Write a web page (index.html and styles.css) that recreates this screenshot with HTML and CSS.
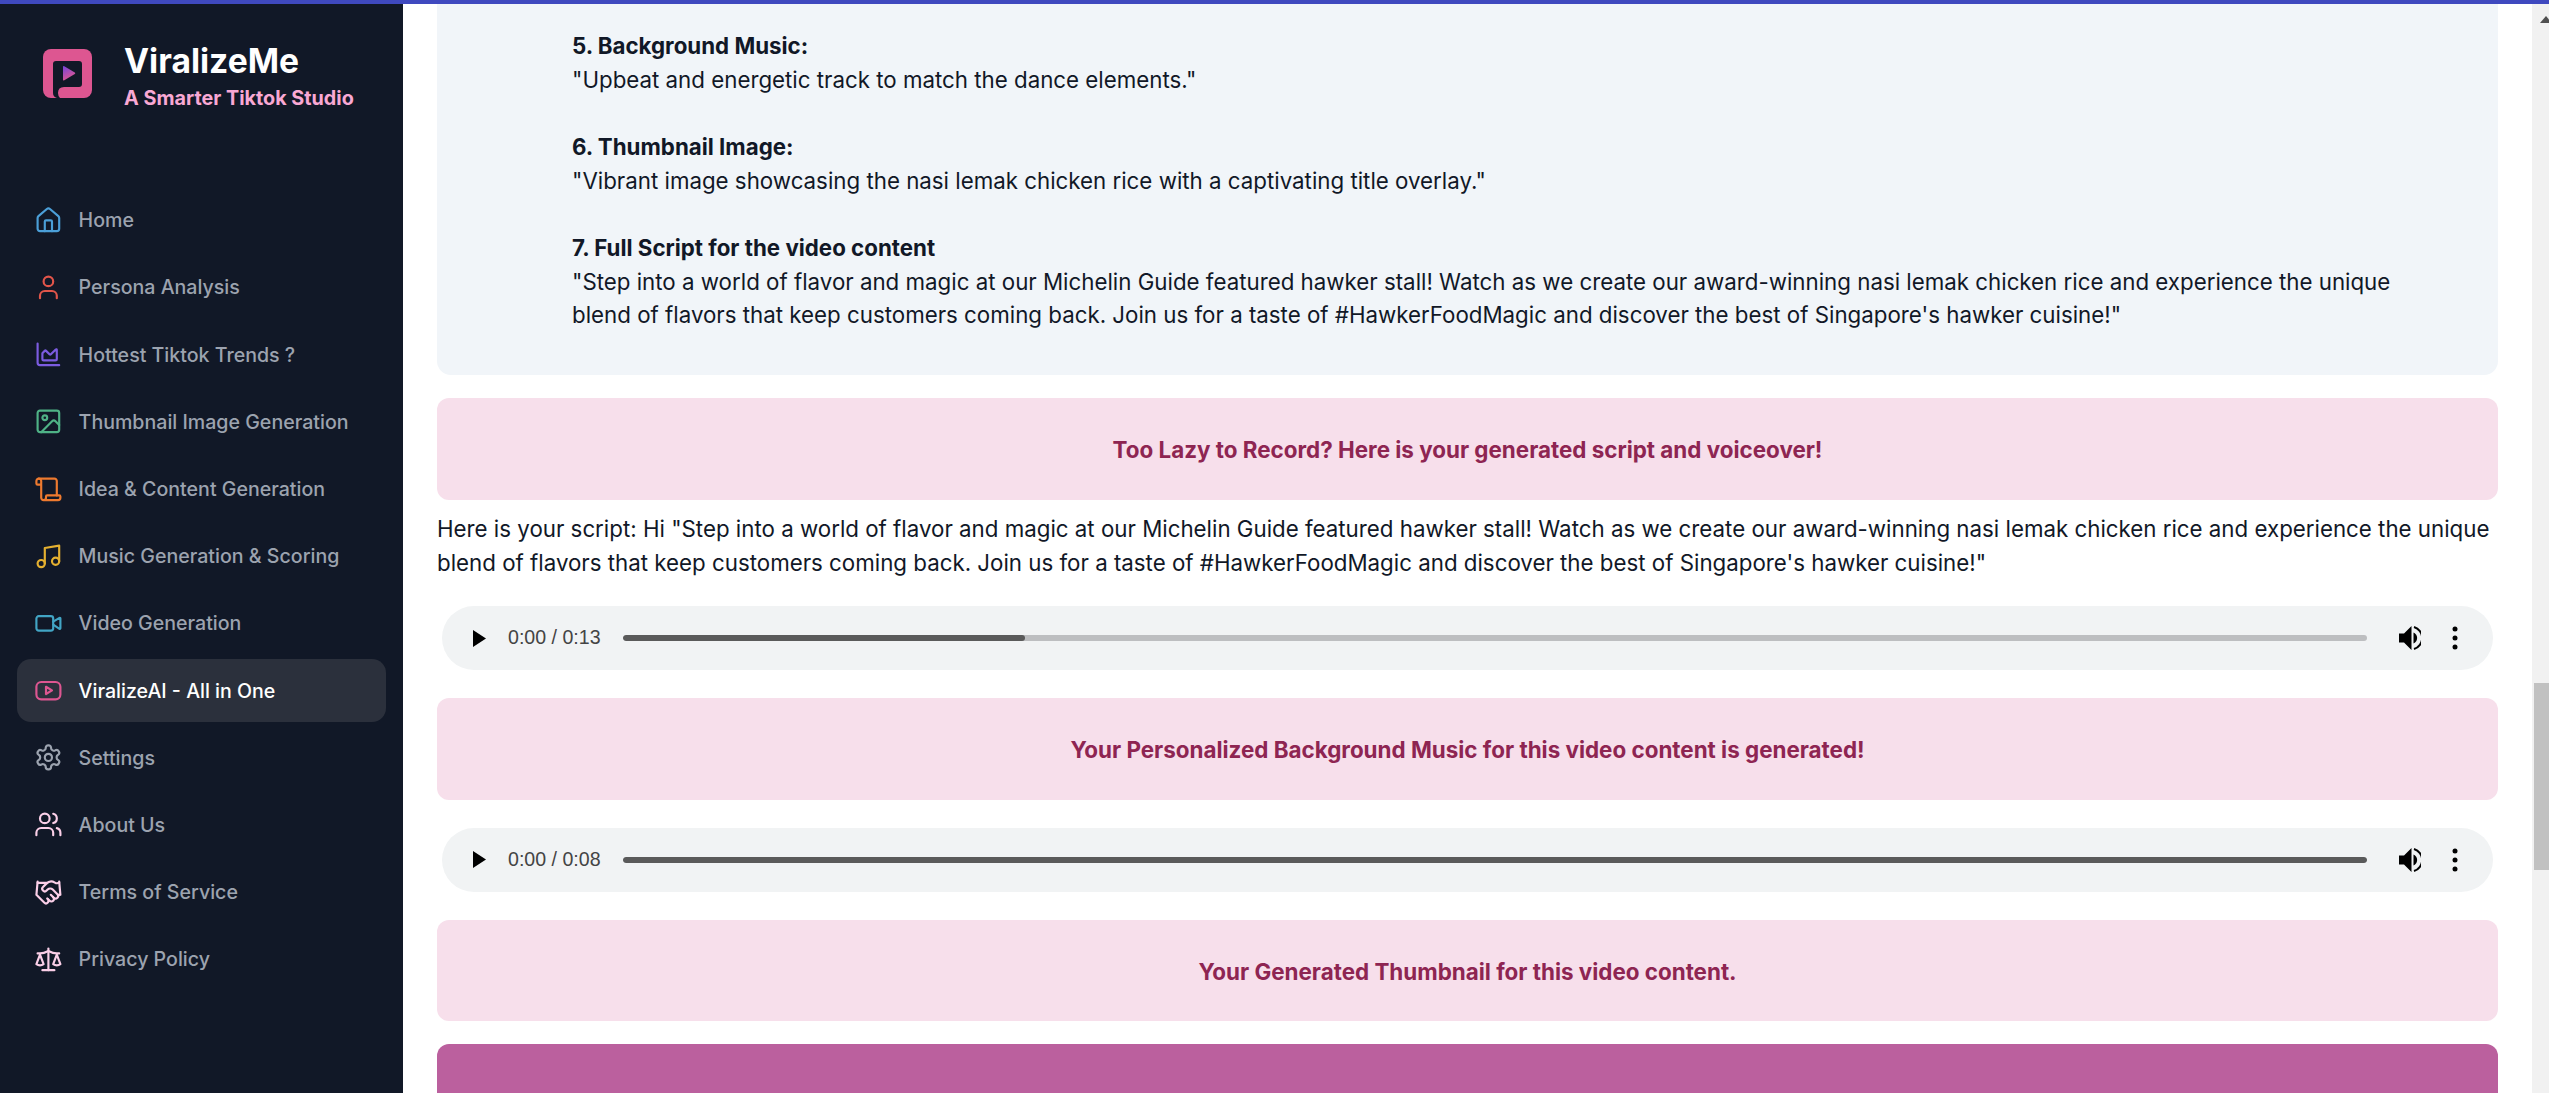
FILE: index.html
```html
<!DOCTYPE html>
<html lang="en">
<head>
  <meta charset="UTF-8">
  <title>ViralizeMe</title>
  <link rel="stylesheet" href="styles.css">
</head>
<body>

  <div class="topbar"></div>

  <div class="layout">
    <aside class="sidebar">
      <div class="brand">
        <svg class="logo" viewBox="0 0 49 49">
          <defs>
            <linearGradient id="playGrad" x1="0" y1="0" x2="0.4" y2="1">
              <stop offset="0" stop-color="#7444dc"/>
              <stop offset="1" stop-color="#dd5691"/>
            </linearGradient>
          </defs>
          <rect width="49" height="49" rx="8" fill="#dd5691"/>
          <path fill="#111827" d="M10 15q0-3 3-3h23q3 0 3 3v20q0 3-3 3H21q-6 0-6 6q0 3 2 5h-3q-4-1-4-5z"/>
          <path fill="url(#playGrad)" d="M20 18q0-1.500 1.300-.8l10.500 6.300q1 .7 0 1.400l-10.500 6.300q-1.300.7-1.300-.8z"/>
        </svg>
        <div>
          <div class="brand-name">ViralizeMe</div>
          <div class="brand-sub">A Smarter Tiktok Studio</div>
        </div>
      </div>

      <nav class="nav">
        <a class="nav-item">
          <svg class="icon ic-blue" viewBox="0 0 24 24"><path d="M15 21v-8a1 1 0 0 0-1-1h-4a1 1 0 0 0-1 1v8"/><path d="M3 10a2 2 0 0 1 .709-1.528l7-5.999a2 2 0 0 1 2.582 0l7 5.999A2 2 0 0 1 21 10v9a2 2 0 0 1-2 2H5a2 2 0 0 1-2-2z"/></svg>
          Home
        </a>
        <a class="nav-item">
          <svg class="icon ic-red" viewBox="0 0 24 24"><path d="M19 21v-2a4 4 0 0 0-4-4H9a4 4 0 0 0-4 4v2"/><circle cx="12" cy="7" r="4"/></svg>
          Persona Analysis
        </a>
        <a class="nav-item">
          <svg class="icon ic-purple" viewBox="0 0 24 24"><path d="M3 3v16a2 2 0 0 0 2 2h16"/><path d="M7 11.207a.5.5 0 0 1 .146-.353l2-2a.5.5 0 0 1 .708 0l3.292 3.292a.5.5 0 0 0 .708 0l4.292-4.292a.5.5 0 0 1 .854.353V16a1 1 0 0 1-1 1H8a1 1 0 0 1-1-1z"/></svg>
          Hottest Tiktok Trends ?
        </a>
        <a class="nav-item">
          <svg class="icon ic-green" viewBox="0 0 24 24"><rect x="3" y="3" width="18" height="18" rx="2"/><circle cx="9" cy="9" r="2"/><path d="m21 15-3.086-3.086a2 2 0 0 0-2.828 0L6 21"/></svg>
          Thumbnail Image Generation
        </a>
        <a class="nav-item">
          <svg class="icon ic-orange" viewBox="0 0 24 24"><path d="M19 17V5a2 2 0 0 0-2-2H4"/><path d="M8 21h12a2 2 0 0 0 2-2v-1a1 1 0 0 0-1-1H11a1 1 0 0 0-1 1v1a2 2 0 1 1-4 0V5a2 2 0 1 0-4 0v2a1 1 0 0 0 1 1h3"/></svg>
          Idea &amp; Content Generation
        </a>
        <a class="nav-item">
          <svg class="icon ic-yellow" viewBox="0 0 24 24"><path d="M9 18V5l12-2v13"/><circle cx="6" cy="18" r="3"/><circle cx="18" cy="16" r="3"/></svg>
          Music Generation &amp; Scoring
        </a>
        <a class="nav-item">
          <svg class="icon ic-cyan" viewBox="0 0 24 24"><path d="m16 13 5.223 3.482a.5.5 0 0 0 .777-.416V7.870a.5.5 0 0 0-.752-.432L16 10.500"/><rect x="2" y="6" width="14" height="12" rx="2"/></svg>
          Video Generation
        </a>
        <a class="nav-item active">
          <svg class="icon ic-pink" viewBox="0 0 24 24"><rect x="2" y="5" width="20" height="14.500" rx="4"/><path d="m10 9 5 3-5 3z"/></svg>
          ViralizeAI - All in One
        </a>
        <a class="nav-item">
          <svg class="icon ic-gray" viewBox="0 0 24 24"><path d="M12.220 2h-.44a2 2 0 0 0-2 2v.18a2 2 0 0 1-1 1.730l-.43.25a2 2 0 0 1-2 0l-.15-.08a2 2 0 0 0-2.730.73l-.22.38a2 2 0 0 0 .73 2.730l.15.1a2 2 0 0 1 1 1.720v.51a2 2 0 0 1-1 1.740l-.15.09a2 2 0 0 0-.73 2.730l.22.38a2 2 0 0 0 2.730.73l.15-.08a2 2 0 0 1 2 0l.43.25a2 2 0 0 1 1 1.730V20a2 2 0 0 0 2 2h.44a2 2 0 0 0 2-2v-.18a2 2 0 0 1 1-1.730l.43-.25a2 2 0 0 1 2 0l.15.08a2 2 0 0 0 2.730-.73l.22-.39a2 2 0 0 0-.73-2.730l-.15-.08a2 2 0 0 1-1-1.740v-.5a2 2 0 0 1 1-1.740l.15-.09a2 2 0 0 0 .73-2.730l-.22-.38a2 2 0 0 0-2.730-.73l-.15.08a2 2 0 0 1-2 0l-.43-.25a2 2 0 0 1-1-1.730V4a2 2 0 0 0-2-2z"/><circle cx="12" cy="12" r="3"/></svg>
          Settings
        </a>
        <a class="nav-item">
          <svg class="icon ic-light" viewBox="0 0 24 24"><path d="M16 21v-2a4 4 0 0 0-4-4H6a4 4 0 0 0-4 4v2"/><circle cx="9" cy="7" r="4"/><path d="M22 21v-2a4 4 0 0 0-3-3.870"/><path d="M16 3.130a4 4 0 0 1 0 7.750"/></svg>
          About Us
        </a>
        <a class="nav-item">
          <svg class="icon ic-light" viewBox="0 0 24 24"><path d="m11 17 2 2a1 1 0 1 0 3-3"/><path d="m14 14 2.500 2.500a1 1 0 1 0 3-3l-3.880-3.880a3 3 0 0 0-4.240 0l-.88.88a1 1 0 1 1-3-3l2.810-2.810a5.790 5.790 0 0 1 7.060-.87l.47.28a2 2 0 0 0 1.420.25L21 4"/><path d="m21 3 1 11h-2"/><path d="M3 3 2 14l6.500 6.500a1 1 0 1 0 3-3"/><path d="M3 4h8"/></svg>
          Terms of Service
        </a>
        <a class="nav-item">
          <svg class="icon ic-light" viewBox="0 0 24 24"><path d="m16 16 3-8 3 8c-.87.65-1.920 1-3 1s-2.130-.35-3-1Z"/><path d="m2 16 3-8 3 8c-.87.65-1.920 1-3 1s-2.130-.35-3-1Z"/><path d="M7 21h10"/><path d="M12 3v18"/><path d="M3 7h2c2 0 5-1 7-2 2 1 5 2 7 2h2"/></svg>
          Privacy Policy
        </a>
      </nav>
    </aside>

    <main class="main">
      <div class="result-box">
        <p class="result-line"><b>5. Background Music:</b></p>
        <p class="result-line">"Upbeat and energetic track to match the dance elements."</p>
        <p class="result-line">&nbsp;</p>
        <p class="result-line"><b>6. Thumbnail Image:</b></p>
        <p class="result-line">"Vibrant image showcasing the nasi lemak chicken rice with a captivating title overlay."</p>
        <p class="result-line">&nbsp;</p>
        <p class="result-line"><b>7. Full Script for the video content</b></p>
        <p class="result-line">"Step into a world of flavor and magic at our Michelin Guide featured hawker stall! Watch as we create our award-winning nasi lemak chicken rice and experience the unique blend of flavors that keep customers coming back. Join us for a taste of #HawkerFoodMagic and discover the best of Singapore's hawker cuisine!"</p>
      </div>

      <div class="banner first">Too Lazy to Record? Here is your generated script and voiceover!</div>

      <p class="script">Here is your script: Hi "Step into a world of flavor and magic at our Michelin Guide featured hawker stall! Watch as we create our award-winning nasi lemak chicken rice and experience the unique blend of flavors that keep customers coming back. Join us for a taste of #HawkerFoodMagic and discover the best of Singapore's hawker cuisine!"</p>

      <div class="player">
        <svg class="play" viewBox="0 0 13 17"><path d="M0 0l13 8.500L0 17z"/></svg>
        <span class="time">0:00 / 0:13</span>
        <div class="track"><div class="progress" style="width: 23.060%"></div></div>
        <svg class="volume" viewBox="0 0 22 26"><path d="M0 8.500h5L12.500 1v24L5 17.500H0z"/><path class="wave" d="M14.500 7.500a6 6 0 0 1 0 11z"/><path class="wave-line" d="M15 2a11.500 11.500 0 0 1 0 22"/></svg>
        <svg class="dots" viewBox="0 0 6 24"><circle cx="3" cy="3" r="2.500"/><circle cx="3" cy="12" r="2.500"/><circle cx="3" cy="21" r="2.500"/></svg>
      </div>

      <div class="banner">Your Personalized Background Music for this video content is generated!</div>

      <div class="player">
        <svg class="play" viewBox="0 0 13 17"><path d="M0 0l13 8.500L0 17z"/></svg>
        <span class="time">0:00 / 0:08</span>
        <div class="track"><div class="progress" style="width: 100%"></div></div>
        <svg class="volume" viewBox="0 0 22 26"><path d="M0 8.500h5L12.500 1v24L5 17.500H0z"/><path class="wave" d="M14.500 7.500a6 6 0 0 1 0 11z"/><path class="wave-line" d="M15 2a11.500 11.500 0 0 1 0 22"/></svg>
        <svg class="dots" viewBox="0 0 6 24"><circle cx="3" cy="3" r="2.500"/><circle cx="3" cy="12" r="2.500"/><circle cx="3" cy="21" r="2.500"/></svg>
      </div>

      <div class="banner">Your Generated Thumbnail for this video content.</div>

      <div class="thumbnail"></div>
    </main>

    <div class="scrollbar">
      <svg class="scroll-arrow" viewBox="0 0 17 24"><path d="M8 19l6-7 6 7z"/></svg>
      <div class="scroll-thumb"></div>
    </div>
  </div>

</body>
</html>
```

FILE: styles.css
```css
* {
  box-sizing: border-box;
}

html, body {
  height: 100%;
}

body {
  margin: 0;
  display: flex;
  flex-direction: column;
  overflow: hidden;
  background: #fff;
  color: #111827;
  font-family: Inter, "Liberation Sans", sans-serif;
}

.topbar {
  height: 4px;
  flex: none;
  background: #3f49bf;
}

.layout {
  flex: 1;
  min-height: 0;
  display: flex;
}

/* sidebar */
.sidebar {
  width: 403px;
  flex: none;
  padding: 0 17px;
  background: #111827;
}

.brand {
  display: flex;
  align-items: center;
  gap: 32px;
  height: 185px;
  padding: 0 0 40px 26px;
}

.logo {
  width: 49px;
  height: 49px;
  flex: none;
  margin-top: -7px;
}

.brand-name {
  font-size: 33.600px;
  line-height: 40px;
  font-weight: 700;
  color: #fff;
}

.brand-sub {
  margin-top: 3px;
  font-size: 19.800px;
  line-height: 28px;
  font-weight: 700;
  color: #f9a8d4;
}

.nav {
  display: flex;
  flex-direction: column;
  gap: 4.800px;
}

.nav-item {
  display: flex;
  align-items: center;
  gap: 16px;
  height: 62.400px;
  padding-left: 16.800px;
  border-radius: 14px;
  font-size: 19.600px;
  font-weight: 500;
  color: #9ca3af;
}

.nav-item.active {
  background: #2b303c;
  color: #fff;
}

.icon {
  width: 28.800px;
  height: 28.800px;
  flex: none;
  fill: none;
  stroke: currentColor;
  stroke-width: 1.800;
  stroke-linecap: round;
  stroke-linejoin: round;
}

.ic-blue { color: #4b9fd8; }
.ic-red { color: #e2554a; }
.ic-purple { color: #7c5ce0; }
.ic-green { color: #4fb286; }
.ic-orange { color: #ee7a2f; }
.ic-yellow { color: #e5b030; }
.ic-cyan { color: #42a5c5; }
.ic-pink { color: #dd5691; }
.ic-gray { color: #9ca3af; }
.ic-light { color: #fbcfe8; }

/* main column */
.main {
  flex: 1;
  min-width: 0;
  overflow: hidden;
  padding: 0 34px;
  font-size: 22.300px;
  line-height: 33.600px;
}

.result-box {
  padding: 25.400px 67px 43.600px 135px;
  background: #f1f5f9;
  border-radius: 0 0 14px 14px;
}

.result-line {
  margin: 0;
}

.banner {
  margin-top: 28px;
  padding: 35px 16px 33px;
  background: #f7dfeb;
  border-radius: 12px;
  text-align: center;
  font-size: 22.400px;
  font-weight: 700;
  color: #8e2552;
}

.banner.first {
  margin-top: 23px;
}

.script {
  margin: 12px 0 27px;
}

/* audio controls */
.player {
  display: flex;
  align-items: center;
  height: 64px;
  margin: 28px 5px 0;
  padding-left: 31px;
  background: #f1f3f4;
  border-radius: 32px;
}

.script + .player {
  margin-top: 0;
}

.play {
  width: 13px;
  height: 17px;
  flex: none;
  margin-right: 22px;
}

.time {
  width: 93px;
  flex: none;
  margin-right: 22px;
  font-family: "Liberation Sans", sans-serif;
  font-size: 19.600px;
  white-space: nowrap;
  color: #444;
}

.track {
  flex: 1;
  height: 6px;
  background: #bdbec0;
  border-radius: 3px;
  overflow: hidden;
}

.progress {
  height: 100%;
  background: #5a5a5a;
  border-radius: 3px;
}

.volume {
  width: 22px;
  height: 26px;
  flex: none;
  margin-left: 32.500px;
}

.wave-line {
  fill: none;
  stroke: #000;
  stroke-width: 2;
}

.dots {
  width: 6px;
  height: 24px;
  flex: none;
  margin: 0 35px 0 31px;
}

.thumbnail {
  height: 200px;
  margin-top: 23px;
  background: #bb609e;
  border-radius: 12px;
}

/* page scrollbar */
.scrollbar {
  width: 17px;
  flex: none;
  overflow: hidden;
  background: #f1f1f1;
}

.scroll-arrow {
  display: block;
  width: 17px;
  height: 24px;
  fill: #505050;
}

.scroll-thumb {
  height: 187px;
  margin: 655px 0 0 2px;
  background: #c1c1c1;
}
```
